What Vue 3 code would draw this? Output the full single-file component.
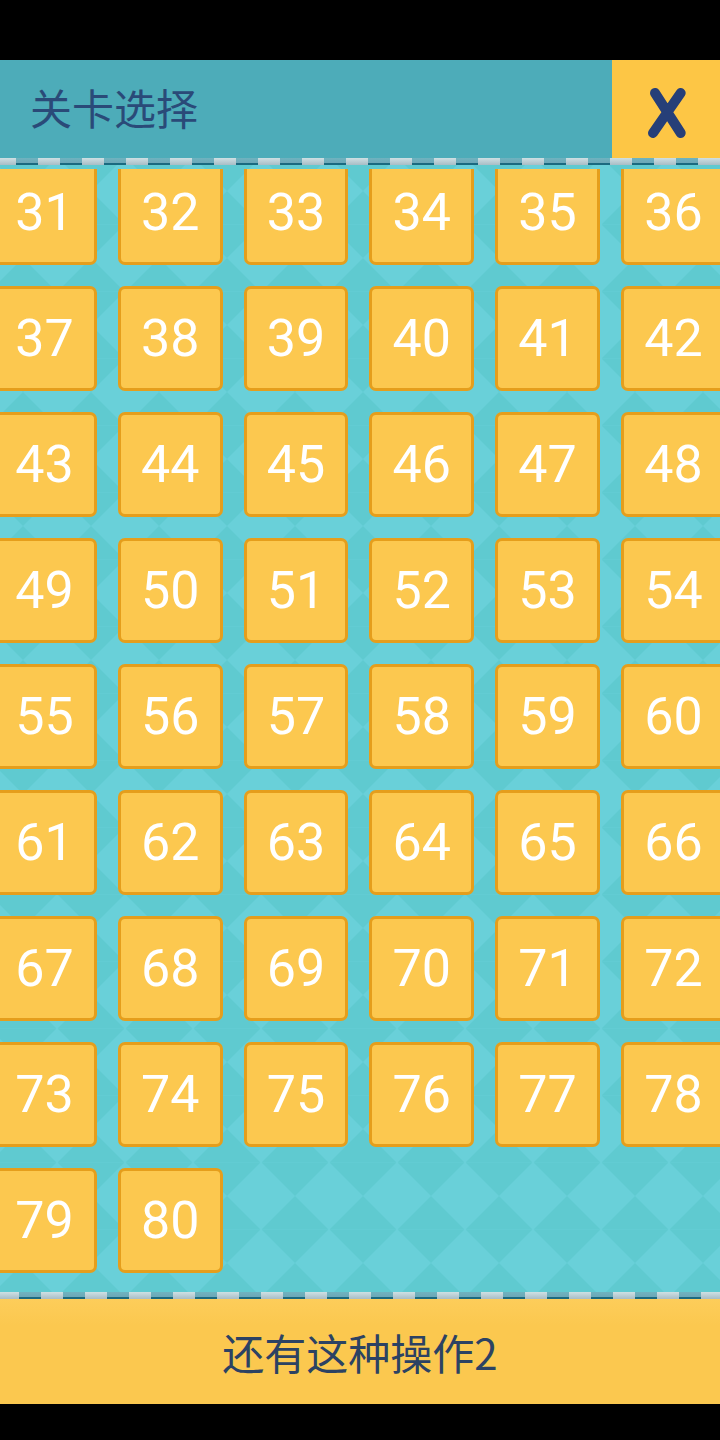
<script setup>
const levels = Array.from({ length: 50 }, (_, i) => i + 31)
</script>

<template>
  <div class="screen">
    <header class="top">
      <h1 class="title">关卡选择</h1>
      <button class="close" aria-label="关闭">
        <svg width="108" height="98" viewBox="0 0 108 98">
          <path d="M43 33 L68.700 73 M68.700 33 L41 73" fill="none" stroke="#263F78" stroke-width="10" stroke-linecap="round" />
        </svg>
      </button>
    </header>
    <div class="strip strip-top"></div>
    <main class="board">
      <div class="viewport">
        <div class="grid">
          <div v-for="n in levels" :key="n" class="tile">{{ n }}</div>
        </div>
      </div>
    </main>
    <div class="strip strip-bottom"></div>
    <footer class="bottom">还有这种操作2</footer>
  </div>
</template>

<style>
html, body { margin: 0; background: #000; }
</style>

<style scoped>
.screen {
  width: 720px;
  height: 1440px;
  box-sizing: border-box;
  padding: 60px 0 36px;
  display: flex;
  flex-direction: column;
  background: #000;
  overflow: hidden;
  font-family: "Noto Sans CJK SC", "Noto Sans", sans-serif;
}
.top {
  height: 98px;
  flex: none;
  display: flex;
  align-items: center;
  justify-content: space-between;
  background: #4DACB9;
}
.title {
  margin: 0 0 0 30px;
  font-size: 42px;
  font-weight: 400;
  color: #2A4A78;
  line-height: 1;
  position: relative;
  top: -2px;
}
.close {
  width: 108px;
  height: 98px;
  padding: 0;
  border: 0;
  display: flex;
  background: #FDC645;
}
.strip {
  height: 7px;
  flex: none;
  position: relative;
  background: linear-gradient(180deg, #6FB3BF 0, #6BA8B8 70%, #1B6A80 70%, #1B6A80 100%);
}
.strip-top { background-color: #4DACB9; }
.strip::after {
  content: "";
  position: absolute;
  inset: 0;
  background: linear-gradient(180deg, #CFE0E3, #A8BDC6);
  -webkit-mask-image: linear-gradient(90deg, #000 50%, transparent 50%);
  mask-image: linear-gradient(90deg, #000 50%, transparent 50%);
  -webkit-mask-size: 44px 100%;
  mask-size: 44px 100%;
}
.strip-top::after { -webkit-mask-position: 38px 0; mask-position: 38px 0; }
.strip-bottom::after { -webkit-mask-position: 41px 0; mask-position: 41px 0; }
.board {
  flex: 1;
  min-height: 0;
  box-sizing: border-box;
  padding-top: 4px;
  display: flex;
  background-color: #69D0D9;
  background-image:
    linear-gradient(to bottom right, #5FCAD0 25%, transparent 25%),
    linear-gradient(to bottom left, #5FCAD0 25%, transparent 25%),
    linear-gradient(to top right, #5FCAD0 25%, transparent 25%),
    linear-gradient(to top left, #5FCAD0 25%, transparent 25%);
  background-size: 68px 67px;
  background-position: 23px 59.5px;
}
.viewport {
  flex: 1;
  overflow: hidden;
}
.grid {
  display: grid;
  grid-template-columns: repeat(6, 104.800px);
  grid-auto-rows: 105px;
  gap: 21px;
  margin: -9px 0 0 -8px;
}
.tile {
  box-sizing: border-box;
  display: flex;
  align-items: center;
  justify-content: center;
  border: 3px solid #E59E1C;
  border-radius: 7px;
  background: #FCC84F;
  color: #fff;
  font-family: Roboto, sans-serif;
  font-size: 52px;
  line-height: 1;
}
.bottom {
  height: 105px;
  flex: none;
  display: flex;
  align-items: center;
  justify-content: center;
  background: linear-gradient(180deg, #FDCD5A 0, #FBC84F 25%, #FBC84F 100%);
  color: #2C4263;
  font-size: 42px;
  line-height: 1;
}
</style>
